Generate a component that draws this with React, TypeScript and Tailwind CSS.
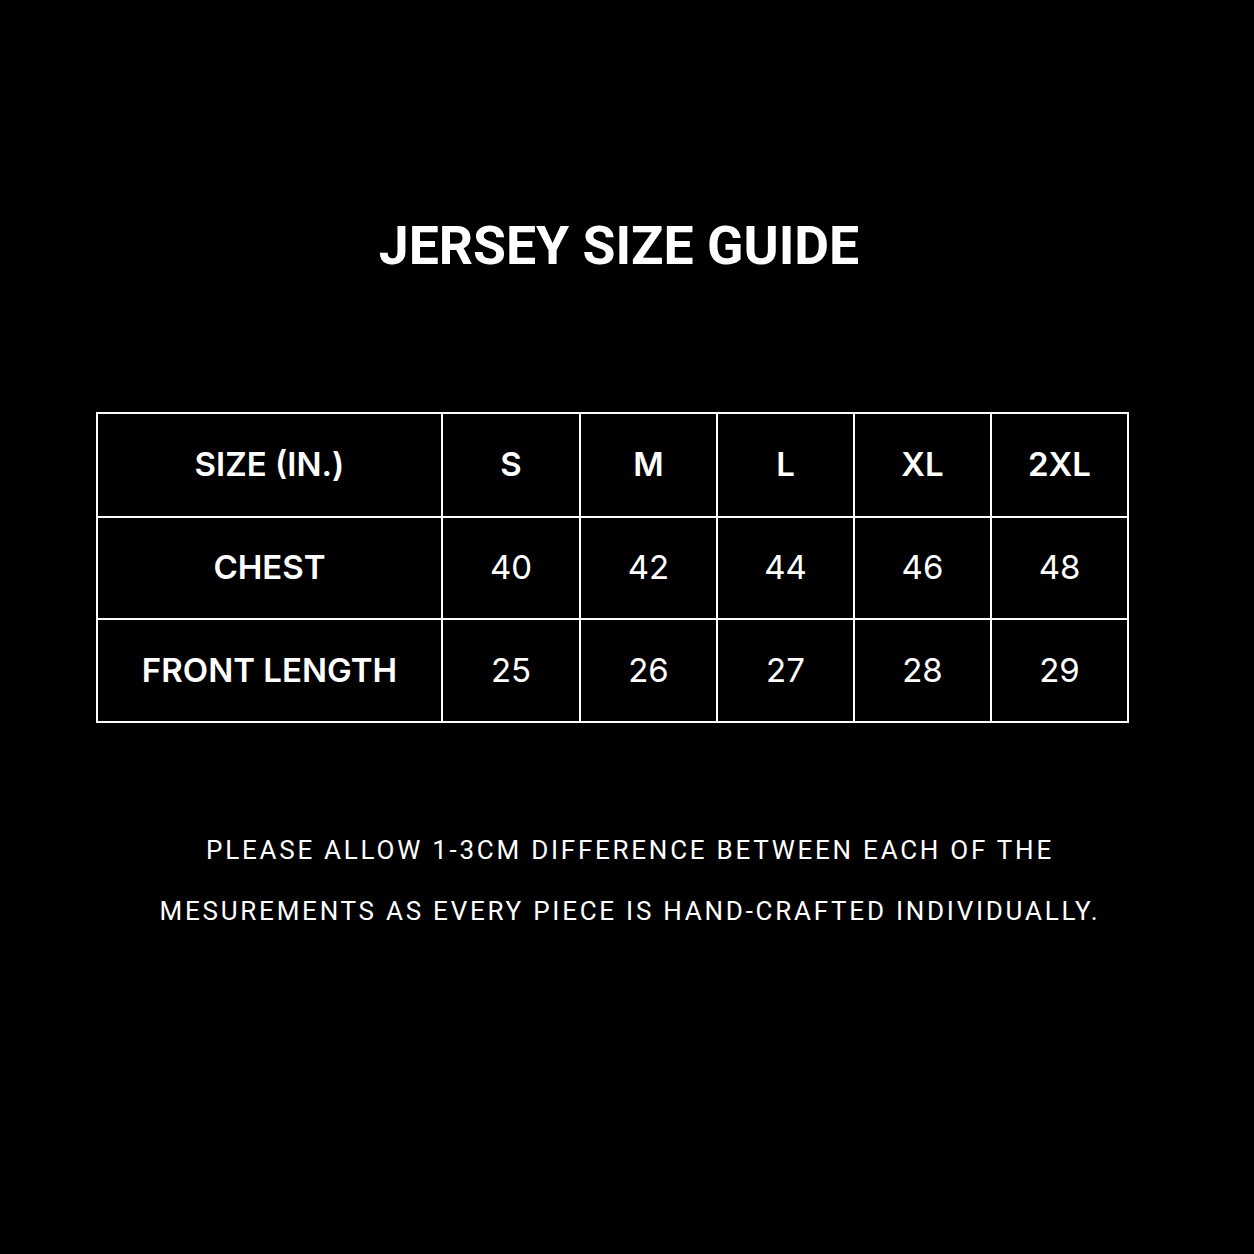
import React from "react";

const cols = ["S", "M", "L", "XL", "2XL"];
const rows = [
  { label: "CHEST", values: ["40", "42", "44", "46", "48"] },
  { label: "FRONT LENGTH", values: ["25", "26", "27", "28", "29"] },
];

export default function App() {
  return (
    <div className="w-[1254px] h-[1254px] bg-black text-white flex flex-col items-center">
      <h1 className="mt-[216px] ml-[-16px] text-[53.5px] leading-[60px] font-bold font-['Roboto',sans-serif]">
        JERSEY SIZE GUIDE
      </h1>
      <div className="mt-[136px] ml-[-29px] border-2 border-white font-['Inter',sans-serif]">
        <div className="grid grid-cols-[343px_138px_137px_137px_137px_137px] grid-rows-[102px_102px_103px]">
          <div className="flex items-center justify-center text-[33px] font-semibold">SIZE (IN.)</div>
          {cols.map((c) => (
            <div key={c} className="flex items-center justify-center border-l-2 border-white text-[33px] font-semibold">
              {c}
            </div>
          ))}
          {rows.map((r) => (
            <React.Fragment key={r.label}>
              <div className="flex items-center justify-center border-t-2 border-white text-[33px] font-semibold">
                {r.label}
              </div>
              {r.values.map((v, i) => (
                <div key={i} className="flex items-center justify-center border-t-2 border-l-2 border-white text-[33px]">
                  {v}
                </div>
              ))}
            </React.Fragment>
          ))}
        </div>
      </div>
      <div className="mt-[97px] ml-[6px] text-center text-[26px] leading-[61px] tracking-[2.75px] font-['Roboto',sans-serif]">
        <p>PLEASE ALLOW 1-3CM DIFFERENCE BETWEEN EACH OF THE</p>
        <p>MESUREMENTS AS EVERY PIECE IS HAND-CRAFTED INDIVIDUALLY.</p>
      </div>
    </div>
  );
}
